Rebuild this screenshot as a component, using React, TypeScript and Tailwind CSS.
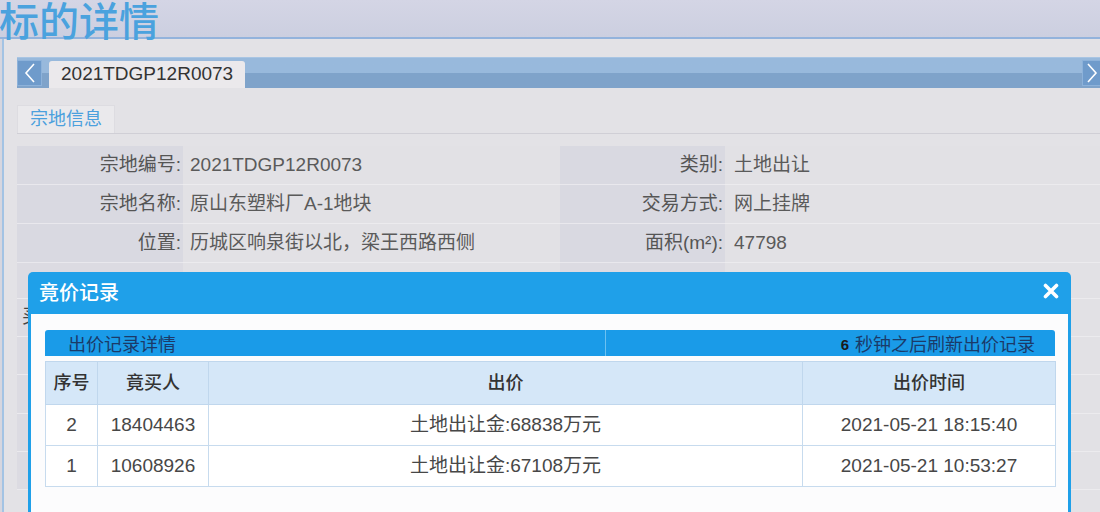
import React from "react";

function Chevron({ dir }: { dir: "left" | "right" }) {
  return (
    <svg width="14" height="22" viewBox="0 0 14 22" fill="none">
      {dir === "left" ? (
        <path d="M11 2 L3 11 L11 20" stroke="white" strokeWidth="1.6" strokeLinejoin="miter" />
      ) : (
        <path d="M3 2 L11 11 L3 20" stroke="white" strokeWidth="1.6" strokeLinejoin="miter" />
      )}
    </svg>
  );
}

const infoRows = [
  ["宗地编号:", "2021TDGP12R0073", "类别:", "土地出让"],
  ["宗地名称:", "原山东塑料厂A-1地块", "交易方式:", "网上挂牌"],
  ["位置:", "历城区响泉街以北，梁王西路西侧", "面积(m²):", "47798"],
];

const bids = [
  ["2", "18404463", "土地出让金:68838万元", "2021-05-21 18:15:40"],
  ["1", "10608926", "土地出让金:67108万元", "2021-05-21 10:53:27"],
];

export default function App() {
  return (
    <div className="relative w-[1100px] h-[512px] overflow-hidden bg-[#e3e2e6] font-['Liberation_Sans','Noto_Sans_CJK_SC',sans-serif]">
      {/* Title band */}
      <div className="h-[39px] bg-gradient-to-b from-[#d4d5e5] to-[#cccfe0] border-b-2 border-[#93b3dc] relative">
        <div className="absolute left-[-1px] top-[1px] text-[40px] leading-[42px] font-medium text-[#4aa2de]">
          标的详情
        </div>
      </div>

      {/* Page body */}
      <div className="flex h-[473px]">
        <div className="w-[2px] bg-[#d6d6df]" />
        <div className="w-[2px] bg-[#a3c3e4]" />
        <div className="flex-1 flex flex-col pl-[13px]">
          {/* Tab bar */}
          <div className="mt-[18px] h-[31px] mr-[-6px] flex items-start bg-gradient-to-b from-[#98b9dc] from-50% to-[#7fa3ca] to-50% border-t border-[#a9c5e3]">
            <div className="mt-[2px] w-[25px] h-[26px] bg-[#6f9bcb] border border-[#8db2da] flex items-center justify-center">
              <Chevron dir="left" />
            </div>
            <div className="ml-[7px] mt-[3px] h-[27px] px-[12px] bg-[#ebe9ec] rounded-t-[3px] flex items-center text-[19px] text-[#333]">
              2021TDGP12R0073
            </div>
            <div className="flex-1" />
            <div className="mt-[2px] w-[24px] h-[26px] bg-[#6f9bcb] border border-[#8db2da] flex items-center justify-start pl-[2px]">
              <Chevron dir="right" />
            </div>
          </div>

          {/* Section tab */}
          <div className="mt-[17px] flex border-b border-[#d0cfd6]">
            <div className="w-[98px] h-[28px] bg-[#eae9ec] border border-b-0 border-[#dddce1] flex items-center justify-center text-[18px] text-[#4ba0dd]">
              宗地信息
            </div>
          </div>

          {/* Info table */}
          <div className="mt-[12px] mr-[-8px] grid grid-cols-[166px_377px_165px_1fr]">
            {infoRows.map((r, i) => (
              <React.Fragment key={i}>
                <div className="h-[39px] bg-[#d9d9e1] border-b border-[#e9e8ed] flex items-center justify-end pr-[2px] text-[19px] text-[#555]">
                  {r[0]}
                </div>
                <div className="h-[39px] bg-[#e2e1e5] border-b border-[#ecebee] flex items-center pl-[7px] text-[19px] text-[#5a5a5a]">
                  {r[1]}
                </div>
                <div className="h-[39px] bg-[#d9d9e1] border-b border-[#e9e8ed] flex items-center justify-end pr-[2px] text-[19px] text-[#555]">
                  {r[2]}
                </div>
                <div className="h-[39px] bg-[#e2e1e5] border-b border-[#ecebee] flex items-center pl-[9px] text-[19px] text-[#5a5a5a]">
                  {r[3]}
                </div>
              </React.Fragment>
            ))}
            {[36, 38, 38, 39, 38, 38].map((h, i) => (
              <React.Fragment key={"e" + i}>
                <div style={{ height: h }} className="bg-[#dcdbe2] border-b border-[#ebeaee] flex items-center pl-[5px] text-[19px] text-[#444]">
                  {i === 1 ? "买受人" : ""}
                </div>
                <div style={{ height: h }} className="bg-[#e2e1e5] border-b border-[#ecebee]" />
                <div style={{ height: h }} className="bg-[#dcdbe2] border-b border-[#ebeaee]" />
                <div style={{ height: h }} className="bg-[#e2e1e5] border-b border-[#ecebee]" />
              </React.Fragment>
            ))}
          </div>
        </div>
      </div>

      {/* Modal overlay */}
      <div className="absolute left-[28px] top-[272px] w-[1043px] h-[260px] flex flex-col">
        <div className="h-[42px] rounded-t-[5px] bg-[#1fa0e9] flex items-center justify-between pl-[11px] pr-[12px]">
          <span className="text-[20px] text-white font-medium">竟价记录</span>
          <svg width="16" height="16" viewBox="0 0 16 16" className="mt-[-4px]">
            <path d="M2.5 2.5 L13.5 13.5 M13.5 2.5 L2.5 13.5" stroke="white" strokeWidth="3.6" strokeLinecap="round" />
          </svg>
        </div>
        <div className="flex-1 bg-[#fcfcfd] border-x-[3px] border-[#1fa0e9] pt-[16px] pl-[14px] pr-[13px]">
          {/* sub header */}
          <div className="h-[26px] rounded-t-[3px] bg-[#1a9be8] flex text-[18px] text-[#1b3a68]">
            <div className="w-[561px] border-r border-[#6cc1f1] flex items-end pl-[23px] leading-[22px]">
              出价记录详情
            </div>
            <div className="flex-1 flex items-end justify-end pr-[20px] leading-[22px]">
              <span className="font-bold text-[#1a1a1a] mr-[6px] text-[15px]">6</span>
              秒钟之后刷新出价记录
            </div>
          </div>
          {/* bids table */}
          <table className="mt-[5px] w-[1010px] border-collapse text-[19px] table-fixed">
            <colgroup>
              <col className="w-[52px]" />
              <col className="w-[111px]" />
              <col className="w-[594px]" />
              <col className="w-[253px]" />
            </colgroup>
            <thead>
              <tr className="h-[43px] bg-[#d5e7f8] text-[#333] text-[18px]">
                <th className="border border-[#c0d7ed] font-medium">序号</th>
                <th className="border border-[#c0d7ed] font-medium">竟买人</th>
                <th className="border border-[#c0d7ed] font-medium">出价</th>
                <th className="border border-[#c0d7ed] font-medium">出价时间</th>
              </tr>
            </thead>
            <tbody>
              {bids.map((b, i) => (
                <tr key={i} className="h-[41px] bg-white text-[#474747]">
                  <td className="border border-[#c7dbee] text-center">{b[0]}</td>
                  <td className="border border-[#c7dbee] text-center">{b[1]}</td>
                  <td className="border border-[#c7dbee] text-center">{b[2]}</td>
                  <td className="border border-[#c7dbee] text-center">{b[3]}</td>
                </tr>
              ))}
            </tbody>
          </table>
        </div>
      </div>
    </div>
  );
}
